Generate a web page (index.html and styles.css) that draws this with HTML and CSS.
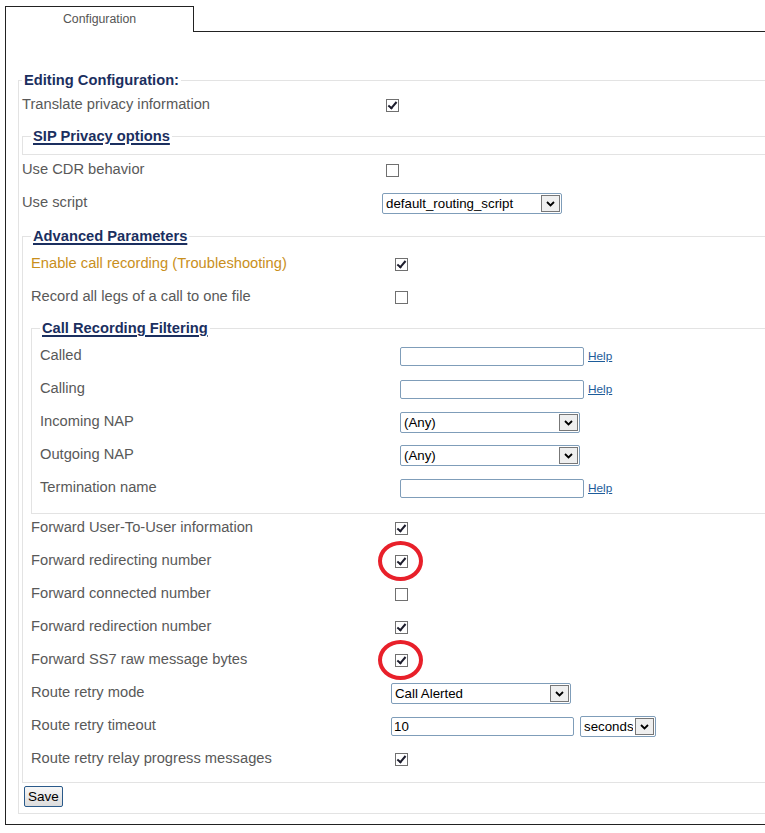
FILE: index.html
```html
<!DOCTYPE html>
<html lang="en">
<head>
    <meta charset="UTF-8">
    <title>Configuration</title>
    <link rel="stylesheet" href="styles.css">
</head>
<body>

<div class="frame">
    <!-- Tabs -->
    <div class="tabs">
        <div class="tab">Configuration</div>
        <div class="tab-fill"></div>
    </div>

    <div class="panel">
        <form>
            <fieldset class="box outer">
                <legend class="plain">Editing Configuration:</legend>
                <div class="row">
                    <span>Translate privacy information</span>
                    <span class="ctl"><input type="checkbox" checked></span>
                </div>

                <fieldset class="box sip"><legend>SIP Privacy options</legend></fieldset>

                <div class="row">
                    <span>Use CDR behavior</span>
                    <span class="ctl"><input type="checkbox"></span>
                </div>
                <div class="row">
                    <span>Use script</span>
                    <span class="ctl">
                        <span class="select">
                            <select><option>default_routing_script</option></select>
                            <span class="arrow"><svg width="9" height="6" viewBox="0 0 9 6"><path d="M1 1l3.5 3.5L8 1" fill="none" stroke="#000" stroke-width="1.8"/></svg></span>
                        </span>
                    </span>
                </div>

                <!-- Advanced -->
                <fieldset class="box adv">
                    <legend>Advanced Parameters</legend>
                    <div class="row">
                        <span class="warn">Enable call recording (Troubleshooting)</span>
                        <span class="ctl"><input type="checkbox" checked></span>
                    </div>
                    <div class="row">
                        <span>Record all legs of a call to one file</span>
                        <span class="ctl"><input type="checkbox"></span>
                    </div>

                    <fieldset class="box crf">
                        <legend>Call Recording Filtering</legend>
                        <div class="row">
                            <span>Called</span>
                            <span class="ctl"><input type="text" class="text"><a href="#" class="help">Help</a></span>
                        </div>
                        <div class="row">
                            <span>Calling</span>
                            <span class="ctl"><input type="text" class="text"><a href="#" class="help">Help</a></span>
                        </div>
                        <div class="row">
                            <span>Incoming NAP</span>
                            <span class="ctl">
                                <span class="select">
                                    <select><option>(Any)</option></select>
                                    <span class="arrow"><svg width="9" height="6" viewBox="0 0 9 6"><path d="M1 1l3.5 3.5L8 1" fill="none" stroke="#000" stroke-width="1.8"/></svg></span>
                                </span>
                            </span>
                        </div>
                        <div class="row">
                            <span>Outgoing NAP</span>
                            <span class="ctl">
                                <span class="select">
                                    <select><option>(Any)</option></select>
                                    <span class="arrow"><svg width="9" height="6" viewBox="0 0 9 6"><path d="M1 1l3.5 3.5L8 1" fill="none" stroke="#000" stroke-width="1.8"/></svg></span>
                                </span>
                            </span>
                        </div>
                        <div class="row">
                            <span>Termination name</span>
                            <span class="ctl"><input type="text" class="text"><a href="#" class="help">Help</a></span>
                        </div>
                    </fieldset>

                    <div class="row">
                        <span>Forward User-To-User information</span>
                        <span class="ctl"><input type="checkbox" checked></span>
                    </div>
                    <div class="row">
                        <span>Forward redirecting number</span>
                        <span class="ctl"><span class="mark"><input type="checkbox" checked></span></span>
                    </div>
                    <div class="row">
                        <span>Forward connected number</span>
                        <span class="ctl"><input type="checkbox"></span>
                    </div>
                    <div class="row">
                        <span>Forward redirection number</span>
                        <span class="ctl"><input type="checkbox" checked></span>
                    </div>
                    <div class="row">
                        <span>Forward SS7 raw message bytes</span>
                        <span class="ctl"><span class="mark"><input type="checkbox" checked></span></span>
                    </div>
                    <div class="row">
                        <span>Route retry mode</span>
                        <span class="ctl">
                            <span class="select">
                                <select><option>Call Alerted</option></select>
                                <span class="arrow"><svg width="9" height="6" viewBox="0 0 9 6"><path d="M1 1l3.5 3.5L8 1" fill="none" stroke="#000" stroke-width="1.8"/></svg></span>
                            </span>
                        </span>
                    </div>
                    <div class="row">
                        <span>Route retry timeout</span>
                        <span class="ctl">
                            <input type="text" class="text timeout" value="10">
                            <span class="select small">
                                <select><option>seconds</option></select>
                                <span class="arrow"><svg width="9" height="6" viewBox="0 0 9 6"><path d="M1 1l3.5 3.5L8 1" fill="none" stroke="#000" stroke-width="1.8"/></svg></span>
                            </span>
                        </span>
                    </div>
                    <div class="row">
                        <span>Route retry relay progress messages</span>
                        <span class="ctl"><input type="checkbox" checked></span>
                    </div>
                </fieldset>

                <button type="button" class="save">Save</button>
            </fieldset>
        </form>
    </div>
</div>

</body>
</html>
```

FILE: styles.css
```css
html {
    overflow: hidden;
}
body {
    margin: 0;
    font-family: "Liberation Sans", Arial, sans-serif;
    background-color: #fff;
}
.frame {
    margin: 6px 0 0 5px;
    width: 900px;
}
.tabs {
    display: flex;
    height: 26px;
}
.tab {
    width: 187px;
    border: 1px solid #222;
    border-bottom: none;
    font-size: 12.3px;
    line-height: 24px;
    color: #555;
    text-align: center;
}
.tab-fill {
    flex: 1;
    border-bottom: 1px solid #222;
}
.panel {
    border-left: 1px solid #222;
    border-bottom: 1px solid #222;
    padding: 39px 0 10px 12px;
}

/* fieldsets */
.box {
    margin: 0;
    border: 1px solid #e3e3e3;
    min-width: 0;
}
.box legend {
    padding: 0 2px;
    font-size: 14.7px;
    line-height: 18px;
    font-weight: bold;
    color: #1b2f5f;
    text-decoration: underline;
    text-decoration-thickness: 2px;
    text-underline-offset: 2px;
}
.box legend.plain {
    text-decoration: none;
}
.outer {
    padding: 0 0 6px 3px;
}
.sip {
    margin: 5px 0 -1px 0;
    padding: 0 0 9px 8px;
}
.adv {
    margin-top: 7px;
    padding: 3px 0 6px 8px;
}
.crf {
    margin: 5px 0 -2px 0;
    padding: 3px 0 8px 8px;
}

/* rows */
.row {
    display: grid;
    grid-template-columns: 360px auto;
    align-items: center;
    min-height: 33px;
    font-size: 14.7px;
    line-height: 17px;
    color: #595959;
}
.row > span:first-child {
    position: relative;
    top: -1px;
}
.warn {
    color: #c98f1c;
}
.ctl {
    display: flex;
    align-items: center;
}

input[type="checkbox"] {
    appearance: none;
    -webkit-appearance: none;
    position: relative;
    width: 13px;
    height: 13px;
    margin: 0 0 0 4px;
    border: 1px solid #707070;
    background-color: #fff;
}
input[type="checkbox"]:checked::after {
    content: "";
    position: absolute;
    left: 3px;
    top: 0;
    width: 3px;
    height: 7px;
    border: solid #1c1c2c;
    border-width: 0 2px 2px 0;
    transform: rotate(40deg);
}

.mark {
    position: relative;
    display: inline-flex;
}
.mark::before {
    content: "";
    position: absolute;
    left: -13px;
    top: -14px;
    width: 45px;
    height: 40px;
    box-sizing: border-box;
    border: 4px solid #e8202a;
    border-radius: 50%;
}

.text {
    box-sizing: border-box;
    width: 184px;
    height: 19px;
    margin: 0;
    padding: 0 2px;
    border: 1px solid #7f9db9;
    border-radius: 2px;
    font-family: inherit;
    font-size: 13.3px;
    color: #000;
}
.timeout {
    width: 183px;
    margin-right: 6px;
}
.help {
    margin-left: 4px;
    font-size: 11.8px;
    color: #1d5c9a;
}

.select {
    position: relative;
    display: inline-block;
    width: 180px;
    height: 21px;
}
.select.small {
    width: 76px;
}
.select select {
    appearance: none;
    -webkit-appearance: none;
    box-sizing: border-box;
    width: 100%;
    height: 100%;
    margin: 0;
    padding: 0 22px 0 3px;
    border: 1px solid #7f9db9;
    border-radius: 2px;
    background-color: #fff;
    font-family: inherit;
    font-size: 13.3px;
    color: #000;
}
.arrow {
    position: absolute;
    right: 2px;
    top: 2px;
    box-sizing: border-box;
    width: 19px;
    height: 17px;
    border: 1px solid #777;
    background-color: #efefef;
    display: flex;
    align-items: center;
    justify-content: center;
    pointer-events: none;
}

.save {
    margin: 3px 0 0 2px;
    padding: 1px 3px;
    border: 1px solid #2a5a8a;
    border-radius: 2px;
    background: linear-gradient(#f7f7f7, #dcdcdc);
    font-family: inherit;
    font-size: 13.5px;
    line-height: 17px;
    color: #000;
}
```
